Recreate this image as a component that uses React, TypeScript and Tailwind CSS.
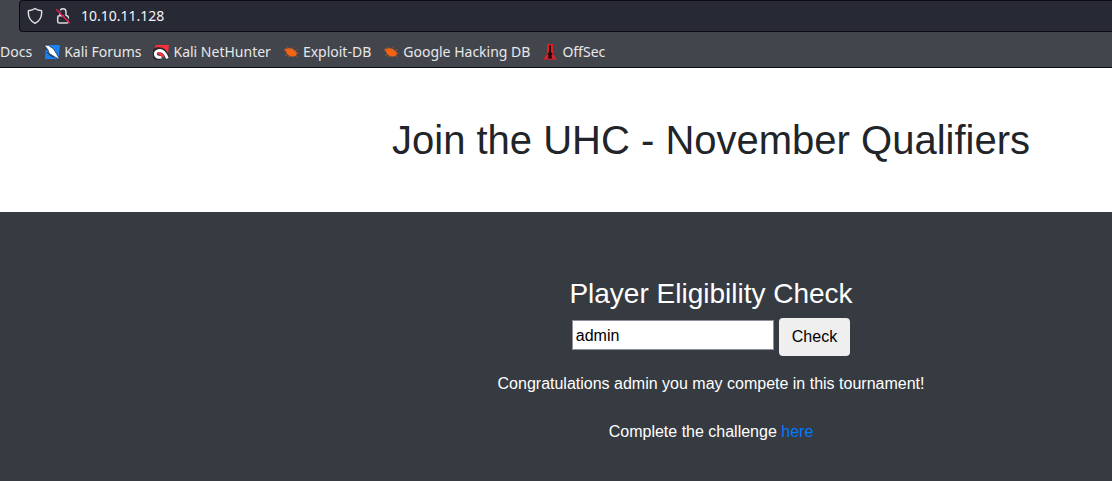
import React, { useState } from 'react';

const ShieldIcon = () => (
  <svg viewBox="0 0 16 18" className="h-[18px] w-4" fill="none" stroke="#e4e4e6" strokeWidth="1.4" strokeLinejoin="round">
    <path d="M8 1.5C6.4 2.8 3.8 3.4 1.4 3.7C0.9 8.8 2.4 13.6 8 16.3C13.6 13.6 15.1 8.8 14.6 3.7C12.2 3.4 9.6 2.8 8 1.5Z" />
  </svg>
);

const InsecureIcon = () => (
  <svg viewBox="0 0 16 18" className="h-[18px] w-4" fill="none">
    <rect x="2.7" y="8.7" width="10.6" height="7.4" rx="1.6" stroke="#dcdce0" strokeWidth="1.5" />
    <path d="M5 8.5V5a3 3.2 0 0 1 6 0v3.5" stroke="#dcdce0" strokeWidth="1.5" />
    <path d="M2.6 1.6L15.4 14.8" stroke="#272934" strokeWidth="1.4" />
    <path d="M1.2 2.2L14.8 16.2" stroke="#e6194b" strokeWidth="1.5" />
  </svg>
);

const ForumsIcon = () => (
  <svg viewBox="0 0 16 16" className="size-4">
    <path d="M2 1h14l-1.5 14H1z" fill="#1a82f7" />
    <path d="M.2 1L4.6 1.4L9.6 5L12 9L15.8 15.6L10 12.4L5.4 9.6L3.8 5.6Z" fill="#fff" stroke="#222831" strokeWidth="0.7" />
    <path d="M1 4.4L3.4 6M2.8 8L5.6 11L10 13.4" stroke="#222831" strokeWidth="0.9" fill="none" />
  </svg>
);

const NetHunterIcon = () => (
  <svg viewBox="0 0 16 16" className="size-4">
    <path d="M3 1h13l-1.4 12.5L8 13L1 5z" fill="#f2323e" />
    <path d="M8 14C-1 14.4-.6 6.4 4.8 5.6C10 4.8 13 9 14.8 15" stroke="#24262c" strokeWidth="4.6" fill="none" />
    <path d="M8.4 13.4C1 14 .8 7.6 5.4 6.6C9.6 5.8 12.4 9 14.4 14.4" stroke="#fff" strokeWidth="2.8" fill="none" />
    <path d="M7 9.4l2.2 2" stroke="#f2323e" strokeWidth="2" />
  </svg>
);

const BugIcon = () => (
  <svg viewBox="0 0 16 16" className="size-4">
    <path d="M1.4 4.8L4.6 4.6C7 3.8 9.8 4.6 11.6 6.6L14 8.8L13.4 11.6C10.6 13.2 6.6 12.6 4.4 10.2C3.2 8.8 2.8 6.8 1.4 4.8Z" fill="#f06414" />
    <path
      d="M3.6 6.4L.6 6.2M5.6 5.2L4.4 2.6M8.6 5L9.6 3.2M11.4 6.8L14.4 5.8M13 9L15.6 9.2M4.6 10L2 11.8M7 11.6L4.8 13.4M12.4 11.8L14.4 13.4"
      stroke="#b5592c"
      strokeWidth="0.8"
    />
  </svg>
);

const OffSecIcon = () => (
  <svg viewBox="0 0 16 16" className="size-4">
    <path d="M5 0h6v10L14.8 15.6H1.2L5 10z" fill="#df1f26" />
    <path d="M7 1.6h2v6.6l1.6 1.8l-1.3 1.8l1.1 2.6H5.6l1.1-2.6l-1.3-1.8L7 8.2z" fill="#22090c" />
  </svg>
);

const bookmarks = [
  { label: 'Kali Forums', icon: ForumsIcon },
  { label: 'Kali NetHunter', icon: NetHunterIcon },
  { label: 'Exploit-DB', icon: BugIcon },
  { label: 'Google Hacking DB', icon: BugIcon },
  { label: 'OffSec', icon: OffSecIcon },
];

const BrowserBar = () => {
  const [url, setUrl] = useState('10.10.11.128');

  return (
    <header className="border-b border-[#0c0c12] bg-[#42454c] font-['Noto_Sans',sans-serif] text-[#e8e8ea]">
      <div className="pl-[19px]">
        <div className="flex h-8 items-center gap-2.5 rounded-l border border-r-0 border-[#0c0c12] bg-[#272934] pl-[7px]">
          <div className="flex gap-3">
            <ShieldIcon />
            <InsecureIcon />
          </div>
          <input
            aria-label="Address"
            value={url}
            onChange={(e) => setUrl(e.target.value)}
            className="min-w-0 flex-1 bg-transparent text-sm text-[#f4f4f6] outline-none"
          />
        </div>
      </div>
      <nav className="flex h-[35px] items-center gap-3 pt-1 text-sm whitespace-nowrap">
        <a href="#docs">Docs</a>
        {bookmarks.map(({ label, icon: Icon }) => (
          <a key={label} href="#bookmark" className="flex items-center gap-1">
            <Icon />
            {label}
          </a>
        ))}
      </nav>
    </header>
  );
};

const App = () => {
  const [player, setPlayer] = useState('admin');

  return (
    <div className="flex min-h-screen flex-col bg-white font-['Liberation_Sans',Arial,sans-serif] text-base text-[#212529]">
      <BrowserBar />

      <section className="py-12 pl-[310px] text-center">
        <h1 className="text-[40px] leading-12">Join the UHC - November Qualifiers</h1>
      </section>

      <section className="flex-1 bg-[#363a41] pt-16 pb-8 pl-[310px] text-center text-white">
        <form onSubmit={(e) => e.preventDefault()}>
          <label htmlFor="player" className="block text-[28px] leading-9">
            Player Eligibility Check
          </label>
          <div className="mt-1.5 flex items-start justify-center gap-[5px]">
            <input
              id="player"
              value={player}
              onChange={(e) => setPlayer(e.target.value)}
              className="mt-0.5 h-[30px] w-[202px] border border-[#8f8f9d] bg-white px-[3px] pt-0.5 text-black"
            />
            <button type="submit" className="h-[38px] rounded bg-[#efefef] px-[13px] text-black">
              Check
            </button>
          </div>
        </form>
        <p className="mt-4">Congratulations admin you may compete in this tournament!</p>
        <p className="mt-6">
          Complete the challenge{' '}
          <a href="#challenge" className="text-[#007bff]">
            here
          </a>
        </p>
      </section>
    </div>
  );
};

export default App;
